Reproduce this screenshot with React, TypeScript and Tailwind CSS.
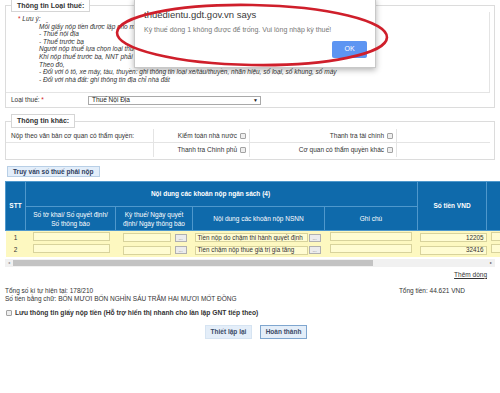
const noteLines = [
  'Mỗi giấy nộp tiền được lập cho một loại thuế:',
  '- Thuế nội địa',
  '- Thuế trước bạ',
  'Người nộp thuế lựa chọn loại thuế phù hợp với khoản nộp',
  'Khi nộp thuế trước bạ, NNT phải ghi rõ thông tin tài sản',
  'Theo đó,',
  '- Đối với ô tô, xe máy, tàu, thuyền: ghi thông tin loại xe/tàu/thuyền, nhãn hiệu, số loại, số khung, số máy',
  '- Đối với nhà đất: ghi thông tin địa chỉ nhà đất',
];

const rows = [
  { stt: 1, content: 'Tiền nộp do chậm thi hành quyết định', amount: '12205' },
  { stt: 2, content: 'Tiền chậm nộp thuế giá trị gia tăng', amount: '32416' },
];

function Check() {
  return (
    <span className="inline-block w-[6px] h-[6px] border border-[#a3a3a3] bg-[#eeeeee] rounded-[1px] align-middle" />
  );
}

function Dots() {
  return (
    <span className="inline-flex items-end justify-center w-[12px] h-[8px] border border-[#b0b0b0] bg-[#ececec] text-[5px] leading-[5px] text-[#666]">
      ...
    </span>
  );
}

function Field({ className, children }: { className: string; children?: React.ReactNode }) {
  return (
    <span
      className={`inline-flex items-center h-[9px] border border-[#d8d39c] bg-[#fffcd2] overflow-hidden whitespace-nowrap text-[6.3px] leading-[8px] ${className}`}
    >
      {children}
    </span>
  );
}

export default function App() {
  return (
    <div className="relative w-[500px] h-[393px] overflow-hidden bg-white font-['Liberation_Sans',Arial,sans-serif] text-[6.5px] text-[#333]">
      <div className="px-[5px]">
        {/* Thông tin Loại thuế */}
        <fieldset className="border border-[#dcdcdc] -mt-[1px]">
          <legend className="ml-[5px] border border-[#d5d5d5] bg-white px-[5px] h-[13px] leading-[11px] text-[7px] font-bold text-[#333]">
            Thông tin Loại thuế:
          </legend>
          <div className="mr-[4px] border-r border-b border-[#e4e4e4] pl-[12px] pt-[3px] pb-[9px] italic leading-[7.6px] text-[#333]">
            <div>
              <span className="text-[#d42020] not-italic">*</span> Lưu ý:
            </div>
            {noteLines.map((line) => (
              <div key={line} className="pl-[21px] whitespace-nowrap">
                {line}
              </div>
            ))}
          </div>
          <div className="flex items-center h-[14px] pl-[5px]">
            <span className="w-[77px]">
              Loại thuế: <span className="text-[#d42020]">*</span>
            </span>
            <span className="flex items-center justify-between w-[173px] h-[9px] border border-[#a9a9a9] pl-[3px] pr-[2px] text-[6.5px] text-[#222]">
              Thuế Nội Địa
              <span className="text-[5px]">▼</span>
            </span>
          </div>
        </fieldset>

        {/* Thông tin khác */}
        <fieldset className="border border-[#dcdcdc] mt-[6px]">
          <legend className="ml-[5px] border border-[#d5d5d5] bg-white px-[5px] h-[14px] leading-[12px] text-[7px] font-bold text-[#333]">
            Thông tin khác:
          </legend>
          <div className="grid grid-cols-[148px_96px_147px_1fr] mr-[4px] mb-[2px] mt-[1px]">
            <div className="flex items-center h-[14px] pl-[5px] border-r border-b border-[#e4e4e4]">
              Nộp theo văn bản cơ quan có thẩm quyền:
            </div>
            <div className="flex items-center justify-end gap-[3px] pr-[3px] border-r border-b border-[#e4e4e4]">
              Kiểm toán nhà nước <Check />
            </div>
            <div className="flex items-center justify-end gap-[3px] pr-[3px] border-r border-b border-[#e4e4e4]">
              Thanh tra tài chính <Check />
            </div>
            <div className="border-b border-[#e4e4e4]" />
            <div className="h-[14px] border-r border-[#e4e4e4]" />
            <div className="flex items-center justify-end gap-[3px] pr-[3px] border-r border-[#e4e4e4]">
              Thanh tra Chính phủ <Check />
            </div>
            <div className="flex items-center justify-end gap-[3px] pr-[3px] border-r border-[#e4e4e4]">
              Cơ quan có thẩm quyền khác <Check />
            </div>
            <div />
          </div>
        </fieldset>

        <button className="mt-[6px] ml-[2px] h-[11px] px-[5px] border border-[#b8cfe6] bg-[#e3eefa] text-[6.5px] font-bold leading-none text-[#2d3d5c]">
          Truy vấn số thuế phải nộp
        </button>

        {/* Bảng khoản nộp */}
        <table className="mt-[4px] table-fixed border-collapse w-[525px] text-white">
          <colgroup>
            <col className="w-[20px]" />
            <col className="w-[90px]" />
            <col className="w-[77px]" />
            <col className="w-[132px]" />
            <col className="w-[93px]" />
            <col className="w-[69px]" />
            <col className="w-[44px]" />
          </colgroup>
          <thead className="bg-[#0f6aab]">
            <tr className="h-[25px]">
              <th rowSpan={2} className="border border-[#4f98cc] font-bold">
                STT
              </th>
              <th colSpan={4} className="border border-[#4f98cc] font-bold pr-[22px]">
                Nội dung các khoản nộp ngân sách (4)
              </th>
              <th rowSpan={2} className="border border-[#4f98cc] font-bold">
                Số tiền VND
              </th>
              <th rowSpan={2} className="border border-[#4f98cc]" />
            </tr>
            <tr className="h-[24px] font-normal leading-[9px]">
              <th className="border border-[#4f98cc] font-normal px-[4px]">
                Số tờ khai/ Số quyết định/ Số thông báo
              </th>
              <th className="border border-[#4f98cc] font-normal px-[6px]">
                Kỳ thuế/ Ngày quyết định/ Ngày thông báo
              </th>
              <th className="border border-[#4f98cc] font-normal">Nội dung các khoản nộp NSNN</th>
              <th className="border border-[#4f98cc] font-normal">Ghi chú</th>
            </tr>
          </thead>
          <tbody className="bg-[#fdf8c0] text-[#333]">
            {rows.map((row) => (
              <tr key={row.stt} className="h-[13px]">
                <td className="text-center">{row.stt}</td>
                <td className="pl-[7px]">
                  <Field className="w-[77px]" />
                </td>
                <td className="pl-[7px]">
                  <span className="flex items-center gap-[4px]">
                    <Field className="w-[48px]" />
                    <Dots />
                  </span>
                </td>
                <td className="pl-[2px]">
                  <span className="flex items-center gap-[1px]">
                    <Field className="w-[113px] pl-[2px]">{row.content}</Field>
                    <Dots />
                  </span>
                </td>
                <td className="pl-[5px]">
                  <Field className="w-[82px]" />
                </td>
                <td className="pl-[2px]">
                  <Field className="w-[67px] justify-end pr-[2px]">{row.amount}</Field>
                </td>
                <td className="pl-[4px]">
                  <Field className="w-[30px]" />
                </td>
              </tr>
            ))}
          </tbody>
        </table>

        {/* thanh cuộn ngang */}
        <div className="mt-[2px] flex items-center w-[490px] h-[8px] bg-[#f1f1f1]">
          <span className="w-[8px] text-center text-[4px] text-[#888]">◂</span>
          <span className="w-[360px] h-[6px] bg-[#c3c3c3]" />
          <span className="flex-1" />
          <span className="w-[8px] text-center text-[4px] text-[#555]">▸</span>
        </div>

        <div className="mt-[4px] flex justify-end pr-[8px] h-[8px] leading-[8px]">
          <span className="underline text-[#333]">Thêm dòng</span>
        </div>

        <div className="mt-[8px] flex justify-between pr-[30px] leading-[8.5px]">
          <span>Tổng số kí tự hiện tại: 178/210</span>
          <span>Tổng tiền: 44.621 VND</span>
        </div>
        <div className="leading-[8.5px]">
          Số tiền bằng chữ: BỐN MƯƠI BỐN NGHÌN SÁU TRĂM HAI MƯƠI MỐT ĐỒNG
        </div>
        <div className="mt-[5px] flex items-center gap-[3px] pl-[1px] leading-[8px] font-bold text-[6.7px]">
          <Check />
          Lưu thông tin giấy nộp tiền (Hỗ trợ hiển thị nhanh cho lần lập GNT tiếp theo)
        </div>

        <div className="mt-[8px] flex justify-center gap-[8px] pl-[12px]">
          <button className="w-[47px] h-[14px] border border-[#d6e4f2] bg-[#e4eef9] text-[6.5px] font-bold text-[#3b4a66]">
            Thiết lập lại
          </button>
          <button className="w-[47px] h-[14px] border border-[#7fa6cf] bg-[#e4eef9] text-[6.5px] font-bold text-[#3b4a66]">
            Hoàn thành
          </button>
        </div>
      </div>

      {/* hộp thoại của trình duyệt */}
      <div className="absolute left-[134px] -top-[2px] w-[242px] h-[70px] border border-[#c8c8c8] bg-white shadow-[0_2px_6px_rgba(0,0,0,0.3)] pl-[9px] pt-[10px]">
        <div className="text-[9.5px] leading-[12px] text-[#3a3a3a]">thuedientu.gdt.gov.vn says</div>
        <div className="mt-[4px] text-[7px] leading-[9px] text-[#777]">
          Kỳ thuế dòng 1 không được để trống. Vui lòng nhập kỳ thuế!
        </div>
        <div className="mt-[7px] flex justify-end pr-[8px]">
          <span className="flex items-center justify-center w-[35px] h-[17px] rounded-[2px] bg-[#5d95f2] text-[7px] text-white">
            OK
          </span>
        </div>
      </div>

      {/* vòng đỏ khoanh thông báo */}
      <svg className="absolute left-[110px] top-0 w-[290px] h-[72px]" viewBox="0 0 290 72" fill="none">
        <ellipse
          cx="142"
          cy="35"
          rx="135"
          ry="30"
          stroke="#cf1f2b"
          strokeWidth="2.6"
          transform="rotate(1 142 35)"
        />
      </svg>
    </div>
  );
}
